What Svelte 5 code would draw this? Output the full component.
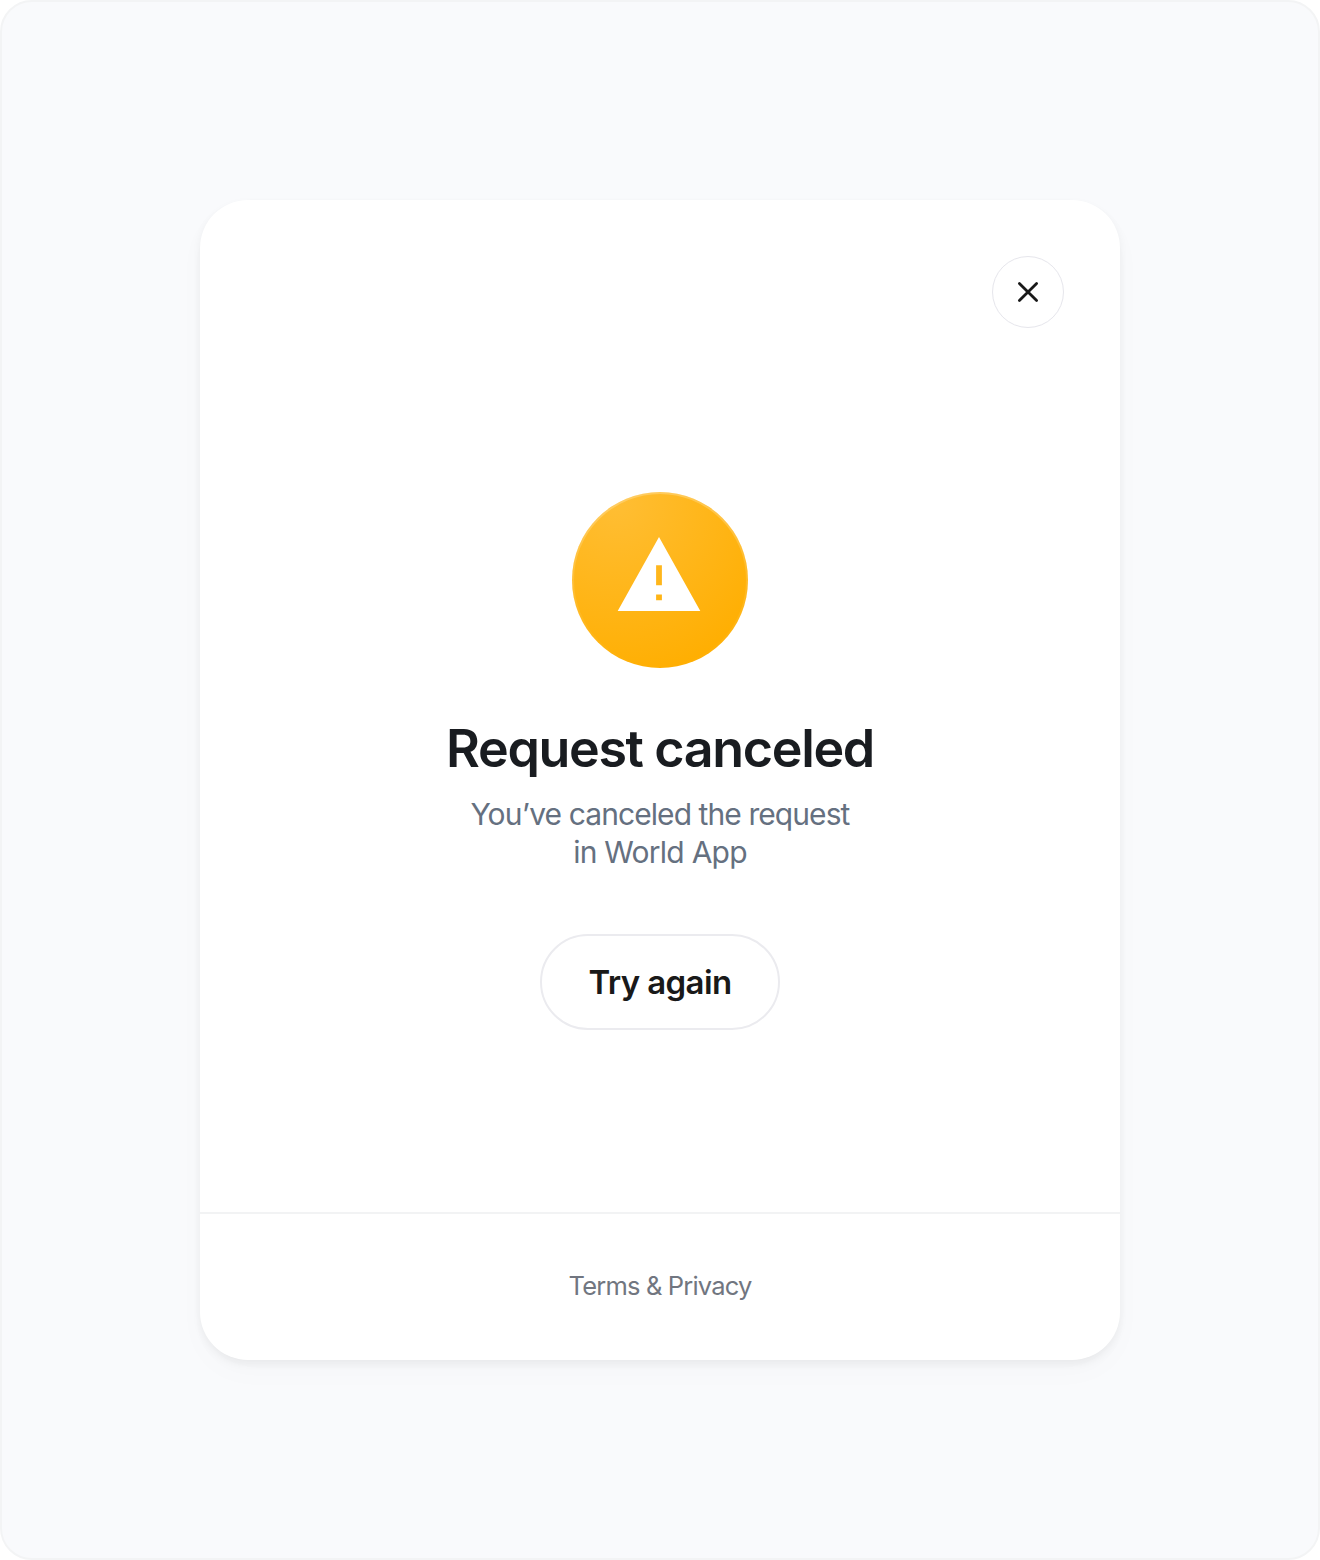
<script>
  const descriptionLines = ['You’ve canceled the request', 'in World App'];
</script>

<div class="stage">
  <section class="card" aria-labelledby="dialog-title">
    <header class="toolbar">
      <button class="close" aria-label="Close">
        <svg width="24" height="24" viewBox="0 0 24 24" fill="none" aria-hidden="true">
          <path d="M3.4 3.4 20.6 20.6M20.6 3.4 3.4 20.6" stroke="#191919" stroke-width="2.8" stroke-linecap="round" />
        </svg>
      </button>
    </header>

    <main class="content">
      <svg class="badge" width="176" height="176" viewBox="0 0 176 176" aria-hidden="true">
        <defs>
          <radialGradient id="fill" cx="0" cy="0" r="1" gradientUnits="userSpaceOnUse" gradientTransform="translate(44 10) rotate(62) scale(182)">
            <stop stop-color="#ffbe34" />
            <stop offset="1" stop-color="#ffae00" />
          </radialGradient>
          <linearGradient id="rim" x1="88" y1="0" x2="88" y2="176" gradientUnits="userSpaceOnUse">
            <stop stop-color="#fff" stop-opacity=".24" />
            <stop offset="1" stop-color="#fff" stop-opacity="0" />
          </linearGradient>
        </defs>
        <circle cx="88" cy="88" r="88" fill="url(#fill)" />
        <circle cx="88" cy="88" r="87" fill="none" stroke="url(#rim)" stroke-width="2" />
        <path
          fill="#fff"
          fill-rule="evenodd"
          d="M87 45 128.3 119H45.7ZM84.1 73.2V93.2H89.9V73.2ZM84.1 102.5V108.2H89.9V102.5Z"
        />
      </svg>
      <h1 id="dialog-title">Request canceled</h1>
      <p class="description">
        {#each descriptionLines as line}
          <span>{line}</span>
        {/each}
      </p>
      <button class="retry"><span>Try again</span></button>
    </main>

    <footer><a href="#terms">Terms &amp; Privacy</a></footer>
  </section>
</div>

<style>
  :global(body) {
    background: #fff;
  }

  .stage {
    box-sizing: border-box;
    width: 1320px;
    height: 1560px;
    display: grid;
    place-items: center;
    border: 2px solid #f3f4f5;
    border-radius: 32px;
    background: #f9fafc;
    font-family: Inter, "Liberation Sans", sans-serif;
    text-align: center;
  }

  .card {
    width: 920px;
    height: 1160px;
    display: flex;
    flex-direction: column;
    border-radius: 48px;
    background: #fff;
    box-shadow:
      0 12px 32px rgba(25, 28, 32, 0.02),
      0 4px 10px -1px rgba(25, 28, 32, 0.07);
  }

  button {
    box-sizing: border-box;
    padding: 0;
    background: #fff;
    font-family: inherit;
    color: #191919;
  }

  .toolbar {
    display: flex;
    justify-content: flex-end;
    padding: 56px 56px 0;
  }

  .close {
    width: 72px;
    height: 72px;
    display: grid;
    place-items: center;
    border: 1px solid #e6e6ec;
    border-radius: 50%;
  }

  .content {
    flex: 1;
    display: flex;
    flex-direction: column;
    align-items: center;
    padding-top: 164px;
  }

  .badge {
    display: block;
  }

  h1 {
    margin: 48px 0 0;
    font-size: 52px;
    line-height: 65px;
    font-weight: 600;
    letter-spacing: -1.35px;
    color: #191c20;
  }

  .description {
    margin: 14px 0 0;
    font-size: 30px;
    line-height: 38px;
    letter-spacing: -0.92px;
    color: #657080;
  }

  .description span {
    display: block;
  }

  .description span:last-child {
    letter-spacing: -0.75px;
  }

  .retry {
    width: 240px;
    height: 96px;
    margin-top: 63px;
    border: 2px solid #ebebef;
    border-radius: 48px;
    font-size: 33px;
    font-weight: 600;
    letter-spacing: -0.62px;
  }

  footer {
    box-sizing: border-box;
    height: 148px;
    display: flex;
    align-items: center;
    justify-content: center;
    padding-bottom: 3px;
    border-top: 2px solid #f2f3f4;
  }

  footer a {
    font-size: 25.5px;
    line-height: 32px;
    letter-spacing: -0.83px;
    color: #717680;
    text-decoration: none;
  }
</style>
